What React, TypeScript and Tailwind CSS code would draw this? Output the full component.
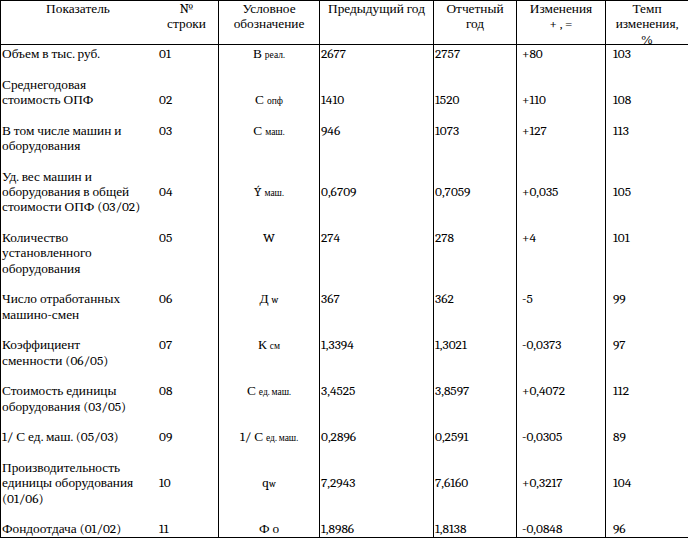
import React from 'react';

type Row = {
  name: string[];
  no: string;
  sym: React.ReactNode;
  prev: string;
  cur: string;
  diff: string;
  rate: string;
  off: number;
};

const Sub = ({ children }: { children: React.ReactNode }) => (
  <span className="text-[9.5px] leading-[0]">{children}</span>
);

const rows: Row[] = [
  { name: ['Объем в тыс. руб.'], no: '01', sym: <>В <Sub>реал.</Sub></>, prev: '2677', cur: '2757', diff: '+80', rate: '103', off: 0 },
  { name: ['Среднегодовая', 'стоимость ОПФ'], no: '02', sym: <>С <Sub>опф</Sub></>, prev: '1410', cur: '1520', diff: '+110', rate: '108', off: 1 },
  { name: ['В том числе машин и', 'оборудования'], no: '03', sym: <>С <Sub>маш.</Sub></>, prev: '946', cur: '1073', diff: '+127', rate: '113', off: 0 },
  { name: ['Уд. вес машин и', 'оборудования в общей', 'стоимости ОПФ (03/02)'], no: '04', sym: <>Ý <Sub>маш.</Sub></>, prev: '0,6709', cur: '0,7059', diff: '+0,035', rate: '105', off: 1 },
  { name: ['Количество', 'установленного', 'оборудования'], no: '05', sym: <>W</>, prev: '274', cur: '278', diff: '+4', rate: '101', off: 0 },
  { name: ['Число отработанных', 'машино-смен'], no: '06', sym: <>Д <Sub>w</Sub></>, prev: '367', cur: '362', diff: '-5', rate: '99', off: 0 },
  { name: ['Коэффициент', 'сменности (06/05)'], no: '07', sym: <>К <Sub>см</Sub></>, prev: '1,3394', cur: '1,3021', diff: '-0,0373', rate: '97', off: 0 },
  { name: ['Стоимость единицы', 'оборудования (03/05)'], no: '08', sym: <>С <Sub>ед. маш.</Sub></>, prev: '3,4525', cur: '3,8597', diff: '+0,4072', rate: '112', off: 0 },
  { name: ['1/ С ед. маш. (05/03)'], no: '09', sym: <>1/ С <Sub>ед. маш.</Sub></>, prev: '0,2896', cur: '0,2591', diff: '-0,0305', rate: '89', off: 0 },
  { name: ['Производительность', 'единицы оборудования', '(01/06)'], no: '10', sym: <>q<Sub>w</Sub></>, prev: '7,2943', cur: '7,6160', diff: '+0,3217', rate: '104', off: 1 },
  { name: ['Фондоотдача (01/02)'], no: '11', sym: <>Ф о</>, prev: '1,8986', cur: '1,8138', diff: '-0,0848', rate: '96', off: 0 },
];

const headers: { lines: string[]; border: boolean }[] = [
  { lines: ['Показатель'], border: false },
  { lines: ['№', 'строки'], border: false },
  { lines: ['Условное', 'обозначение'], border: true },
  { lines: ['Предыдущий год'], border: true },
  { lines: ['Отчетный', 'год'], border: true },
  { lines: ['Изменения', '+ , ='], border: true },
  { lines: ['Темп', 'изменения,', '%'], border: true },
];

export default function App() {
  return (
    <div className="w-[688px] h-[539px] overflow-hidden bg-white text-black font-serif text-[13.33px] leading-[15.33px]">
      <div className="grid grid-cols-[154px_63px_101px_114px_83px_89px_83px] border-l border-t border-b border-black w-[700px]">
        {headers.map((h, i) => (
          <div
            key={i}
            className={`h-[44px] border-b border-black text-center whitespace-nowrap ${h.border ? 'border-l' : ''}`}
          >
            {h.lines.map((l) => (
              <div key={l}>{l}</div>
            ))}
          </div>
        ))}
        {rows.map((r, i) => {
          const top = i === 0 ? 'pt-[1px]' : 'pt-[15.33px]';
          const val = r.off ? 'mt-[15.33px]' : '';
          return (
            <React.Fragment key={r.no}>
              <div className={`${top} pl-[1px] whitespace-nowrap`}>
                {r.name.map((l) => (
                  <div key={l}>{l}</div>
                ))}
              </div>
              <div className={`${top} pl-[4px]`}>
                <div className={val}>{r.no}</div>
              </div>
              <div className={`${top} border-l border-black text-center whitespace-nowrap`}>
                <div className={val}>{r.sym}</div>
              </div>
              <div className={`${top} border-l border-black pl-[1px]`}>
                <div className={val}>{r.prev}</div>
              </div>
              <div className={`${top} border-l border-black pl-[1px]`}>
                <div className={val}>{r.cur}</div>
              </div>
              <div className={`${top} border-l border-black pl-[5px]`}>
                <div className={val}>{r.diff}</div>
              </div>
              <div className={`${top} border-l border-black pl-[7px]`}>
                <div className={val}>{r.rate}</div>
              </div>
            </React.Fragment>
          );
        })}
      </div>
    </div>
  );
}
